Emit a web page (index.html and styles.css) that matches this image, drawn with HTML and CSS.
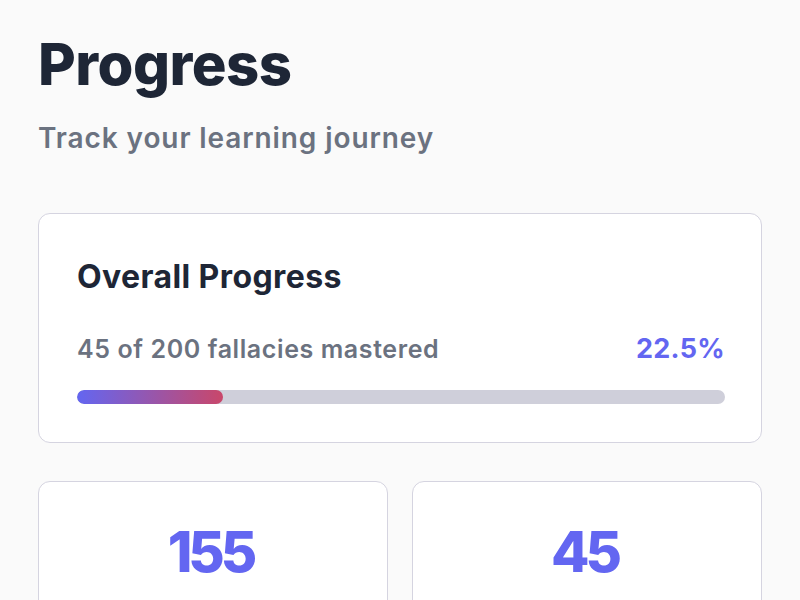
FILE: index.html
```html
<!DOCTYPE html>
<html lang="en">
<head>
<meta charset="utf-8">
<title>Progress</title>
<link rel="stylesheet" href="styles.css">
</head>
<body>
<main class="page">
  <header class="header">
    <h1 class="title">Progress</h1>
    <p class="subtitle">Track your learning journey</p>
  </header>
  <section class="card overall">
    <h2 class="card-title">Overall Progress</h2>
    <div class="progress-row">
      <span class="progress-label">45 of 200 fallacies mastered</span>
      <span class="progress-value">22.5%</span>
    </div>
    <div class="bar"><div class="bar-fill" style="width: 22.5%"></div></div>
  </section>
  <section class="stats">
    <div class="card stat"><span class="stat-num">155</span></div>
    <div class="card stat"><span class="stat-num">45</span></div>
  </section>
</main>
</body>
</html>
```
FILE: styles.css
```css
* { box-sizing: border-box; }
html, body { margin: 0; padding: 0; }
html { height: 600px; overflow: hidden; }
body {
  height: 600px;
  background: #fafafa;
  font-family: Inter, "Noto Sans", sans-serif;
  color: #1e2636;
  overflow: hidden;
}
.page {
  padding: 28px 38px 0 38px;
  display: flex;
  flex-direction: column;
}
.header { margin-bottom: 57px; }
.title {
  margin: 0;
  font-size: 58px;
  font-weight: 800;
  line-height: 72px;
  letter-spacing: -0.5px;
  color: #1e2636;
}
.subtitle {
  margin: 20px 0 0 0;
  font-size: 28px;
  font-weight: 600;
  line-height: 36px;
  letter-spacing: 0.9px;
  color: #6b7280;
}
.card {
  background: #ffffff;
  border: 1.5px solid #d5d4e0;
  border-radius: 12px;
}
.overall {
  padding: 43px 36px 38px 38px;
}
.card-title {
  margin: 0;
  font-size: 32px;
  font-weight: 700;
  line-height: 40px;
  letter-spacing: 0.4px;
  color: #1e2636;
}
.progress-row {
  margin-top: 36px;
  display: flex;
  justify-content: space-between;
  align-items: baseline;
}
.progress-label {
  font-size: 25px;
  font-weight: 600;
  line-height: 32px;
  letter-spacing: 0.6px;
  color: #6b7280;
}
.progress-value {
  font-size: 27px;
  font-weight: 700;
  line-height: 32px;
  letter-spacing: 0.3px;
  color: #6366f1;
}
.bar {
  margin-top: 25px;
  height: 14px;
  border-radius: 7px;
  background: #cfcfda;
  overflow: hidden;
}
.bar-fill {
  height: 100%;
  border-radius: 7px;
  background: linear-gradient(90deg, #6366f1 0%, #c9476a 100%);
}
.stats {
  margin-top: 38px;
  display: grid;
  grid-template-columns: 1fr 1fr;
  gap: 24px;
}
.stat {
  height: 160px;
  display: flex;
  justify-content: center;
  padding-top: 40px;
}
.stat-num {
  font-size: 56px;
  font-weight: 800;
  line-height: 60px;
  color: #6366f1;
  letter-spacing: -4px;
  margin-right: 5px;
}
```
